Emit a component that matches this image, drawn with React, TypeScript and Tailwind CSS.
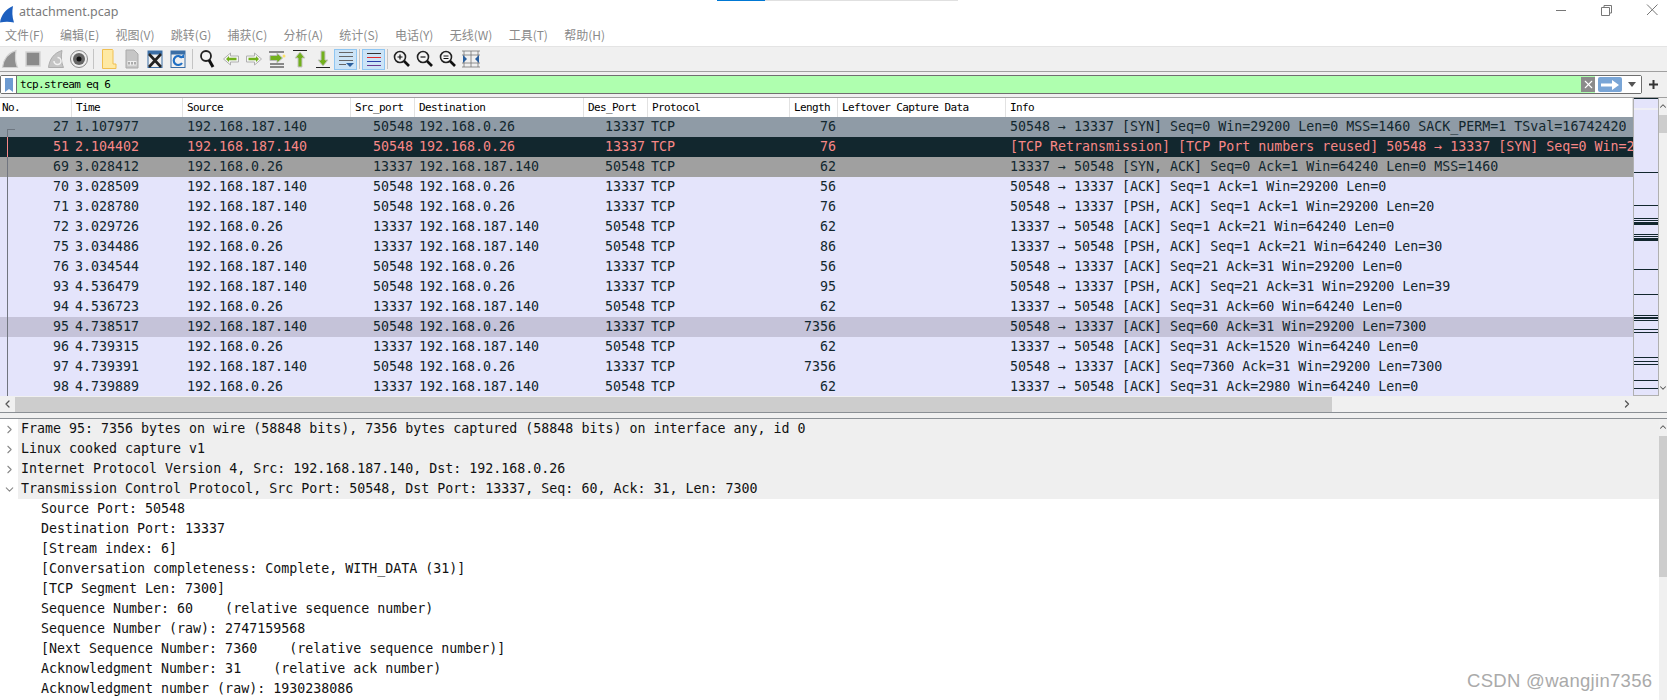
import { ChevronRight, ChevronDown, ChevronLeft, ChevronUp, X } from 'lucide-react';

const MONO = 'font-["DejaVu_Sans_Mono","Liberation_Mono",monospace]';

type Tone = 'tcp' | 'first' | 'retrans' | 'synack' | 'selected';

const rowTone: Record<Tone, string> = {
  tcp: 'bg-[#e4e4fb] text-[#12272e]',
  first: 'bg-[#8f9ba6] text-[#12272e]',
  retrans: 'bg-[#12272e] text-[#f78787]',
  synack: 'bg-[#a0a0a0] text-[#12272e]',
  selected: 'bg-[#c5c3d9] text-[#12272e]',
};

const A = '192.168.187.140';
const B = '192.168.0.26';

const packets: { no: number; time: string; out: boolean; len: number; info: string; tone: Tone }[] = [
  { no: 27, time: '1.107977', out: true, len: 76, info: '50548 → 13337 [SYN] Seq=0 Win=29200 Len=0 MSS=1460 SACK_PERM=1 TSval=16742420', tone: 'first' },
  { no: 51, time: '2.104402', out: true, len: 76, info: '[TCP Retransmission] [TCP Port numbers reused] 50548 → 13337 [SYN] Seq=0 Win=2', tone: 'retrans' },
  { no: 69, time: '3.028412', out: false, len: 62, info: '13337 → 50548 [SYN, ACK] Seq=0 Ack=1 Win=64240 Len=0 MSS=1460', tone: 'synack' },
  { no: 70, time: '3.028509', out: true, len: 56, info: '50548 → 13337 [ACK] Seq=1 Ack=1 Win=29200 Len=0', tone: 'tcp' },
  { no: 71, time: '3.028780', out: true, len: 76, info: '50548 → 13337 [PSH, ACK] Seq=1 Ack=1 Win=29200 Len=20', tone: 'tcp' },
  { no: 72, time: '3.029726', out: false, len: 62, info: '13337 → 50548 [ACK] Seq=1 Ack=21 Win=64240 Len=0', tone: 'tcp' },
  { no: 75, time: '3.034486', out: false, len: 86, info: '13337 → 50548 [PSH, ACK] Seq=1 Ack=21 Win=64240 Len=30', tone: 'tcp' },
  { no: 76, time: '3.034544', out: true, len: 56, info: '50548 → 13337 [ACK] Seq=21 Ack=31 Win=29200 Len=0', tone: 'tcp' },
  { no: 93, time: '4.536479', out: true, len: 95, info: '50548 → 13337 [PSH, ACK] Seq=21 Ack=31 Win=29200 Len=39', tone: 'tcp' },
  { no: 94, time: '4.536723', out: false, len: 62, info: '13337 → 50548 [ACK] Seq=31 Ack=60 Win=64240 Len=0', tone: 'tcp' },
  { no: 95, time: '4.738517', out: true, len: 7356, info: '50548 → 13337 [ACK] Seq=60 Ack=31 Win=29200 Len=7300', tone: 'selected' },
  { no: 96, time: '4.739315', out: false, len: 62, info: '13337 → 50548 [ACK] Seq=31 Ack=1520 Win=64240 Len=0', tone: 'tcp' },
  { no: 97, time: '4.739391', out: true, len: 7356, info: '50548 → 13337 [ACK] Seq=7360 Ack=31 Win=29200 Len=7300', tone: 'tcp' },
  { no: 98, time: '4.739889', out: false, len: 62, info: '13337 → 50548 [ACK] Seq=31 Ack=2980 Win=64240 Len=0', tone: 'tcp' },
];

const menus = ['文件(F)', '编辑(E)', '视图(V)', '跳转(G)', '捕获(C)', '分析(A)', '统计(S)', '电话(Y)', '无线(W)', '工具(T)', '帮助(H)'];

const columns = [
  { label: 'No.', w: 'w-[72px] pl-[2px]' },
  { label: 'Time', w: 'w-[111px] pl-[4px]' },
  { label: 'Source', w: 'w-[168px] pl-[4px]' },
  { label: 'Src_port', w: 'w-[64px] pl-[4px]' },
  { label: 'Destination', w: 'w-[169px] pl-[4px]' },
  { label: 'Des_Port', w: 'w-[64px] pl-[4px]' },
  { label: 'Protocol', w: 'w-[142px] pl-[4px]' },
  { label: 'Length', w: 'w-[48px] pl-[4px]' },
  { label: 'Leftover Capture Data', w: 'w-[168px] pl-[4px]' },
  { label: 'Info', w: 'flex-1 pl-[4px]' },
];

const details: { text: string; open?: boolean; child?: boolean }[] = [
  { text: 'Frame 95: 7356 bytes on wire (58848 bits), 7356 bytes captured (58848 bits) on interface any, id 0' },
  { text: 'Linux cooked capture v1' },
  { text: 'Internet Protocol Version 4, Src: 192.168.187.140, Dst: 192.168.0.26' },
  { text: 'Transmission Control Protocol, Src Port: 50548, Dst Port: 13337, Seq: 60, Ack: 31, Len: 7300', open: true },
  { text: 'Source Port: 50548', child: true },
  { text: 'Destination Port: 13337', child: true },
  { text: '[Stream index: 6]', child: true },
  { text: '[Conversation completeness: Complete, WITH_DATA (31)]', child: true },
  { text: '[TCP Segment Len: 7300]', child: true },
  { text: 'Sequence Number: 60    (relative sequence number)', child: true },
  { text: 'Sequence Number (raw): 2747159568', child: true },
  { text: '[Next Sequence Number: 7360    (relative sequence number)]', child: true },
  { text: 'Acknowledgment Number: 31    (relative ack number)', child: true },
  { text: 'Acknowledgment number (raw): 1930238086', child: true },
];

// intensity bars on the packet minimap: [y, height]
const miniMarks = [[0, 1], [74, 1], [107, 1], [120, 1], [122, 1], [124, 3], [136, 1], [138, 1], [140, 3], [171, 1], [196, 1], [217, 1], [219, 2], [222, 1], [231, 1], [234, 1], [259, 1], [263, 1], [266, 1], [282, 1], [290, 1]];

function Frame({ children }: { children: React.ReactNode }) {
  return <svg width="20" height="20" viewBox="0 0 20 20" fill="none">{children}</svg>;
}

function Glass({ mark }: { mark: 'plus' | 'minus' | 'equal' }) {
  return (
    <Frame>
      <circle cx="8" cy="8" r="5.5" fill="#f4f4f4" stroke="#222" strokeWidth="1.6" />
      <path d="M12 12l5 5" stroke="#111" strokeWidth="2.6" />
      {mark === 'plus' && <path d="M5.5 8h5M8 5.5v5" stroke="#111" strokeWidth="1.2" />}
      {mark === 'minus' && <path d="M5.5 8h5" stroke="#111" strokeWidth="1.2" />}
      {mark === 'equal' && <path d="M5.5 7h5M5.5 9.5h5" stroke="#111" strokeWidth="1.1" />}
    </Frame>
  );
}

function Arrow({ dir }: { dir: 'left' | 'right' }) {
  const flip = dir === 'left' ? 'translate(20 0) scale(-1 1)' : undefined;
  return (
    <Frame>
      <g transform={flip}>
        <path d="M2.5 7h8V4l7 6-7 6v-3h-8z" fill="#f6f6f6" stroke="#b0b0b0" />
        <path d="M4.5 8.8h7.5V7l3 3-3 3v-1.8H4.5z" fill="#72b01d" />
      </g>
    </Frame>
  );
}

const toolbar: (React.ReactNode | 'sep' | 'sepSmall')[] = [
  <Frame><path d="M2.5 18.5C3.5 10 8 4 16 1.5c-1 6-1 11 1.5 17z" fill="#8f8f8f" stroke="#d2d2d2" strokeWidth="1.2" /></Frame>,
  <Frame><rect x="3" y="3" width="14" height="14" fill="#8a8a8a" stroke="#d4d4d4" strokeWidth="1.5" /></Frame>,
  <Frame><path d="M2.5 18.5C3.5 10 8 4 16 1.5c-1 6-1 11 1.5 17z" fill="#c4c4c4" stroke="#adadad" /><path d="M8 12a3.5 3.5 0 1 0 3.5-3.5" stroke="#f2f2f2" strokeWidth="1.5" /></Frame>,
  <Frame><circle cx="10" cy="10" r="8.5" fill="#eee" stroke="#8a8a8a" /><circle cx="10" cy="10" r="6" fill="#666" /><circle cx="10" cy="10" r="2.5" fill="#111" /></Frame>,
  'sep',
  <Frame><path d="M3.5 0.5h10l.5 1v13.5h3v4.5H3.5z" fill="#fee9a3" stroke="#f0bf50" /></Frame>,
  <Frame><path d="M4 1h8l4 4v14H4z" fill="#c6c6c6" stroke="#aaa" /><path d="M5.5 12h9v4.5h-9z" fill="#efefef" /><path d="M7 13v2.5M10 13v2.5M13 13v2.5" stroke="#666" /></Frame>,
  <Frame><rect x="3" y="2" width="14" height="16.5" fill="#f0f0f0" stroke="#3b6ea5" /><path d="M3 2h14v3.5H3z" fill="#3b6ea5" /><path d="M4 5l12 13M16 5L4 18" stroke="#222" strokeWidth="2.6" /></Frame>,
  <Frame><rect x="3" y="2" width="14" height="16.5" fill="#f0f0f0" stroke="#3b6ea5" /><path d="M3 2h14v3.5H3z" fill="#3b6ea5" /><path d="M14 9a4.5 4.5 0 1 0 0 5" stroke="#1f6fc4" strokeWidth="2.2" /><path d="M11 9h5V5z" fill="#1f6fc4" /></Frame>,
  'sep',
  <Frame><circle cx="8" cy="7" r="5" fill="#f4f4f4" stroke="#222" strokeWidth="1.8" /><path d="M11 11l4 7" stroke="#111" strokeWidth="3" /></Frame>,
  <Arrow dir="left" />,
  <Arrow dir="right" />,
  <Frame>
    <path d="M2 3h15M3 15h14M3 18h14" stroke="#222" />
    <path d="M3 6.5h7V4l5.5 5-5.5 5v-2.5H3z" fill="#72b01d" stroke="#bbb" />
    <circle cx="17" cy="7" r="1.5" fill="#fde26b" />
  </Frame>,
  <Frame><path d="M3 1.5h14" stroke="#222" /><path d="M10 3l5 6h-3v9H8V9H5z" fill="#72b01d" stroke="#c6c6c6" /></Frame>,
  <Frame><path d="M3 18.5h14" stroke="#222" /><path d="M10 17l5-6h-3V2H8v9H5z" fill="#72b01d" stroke="#c6c6c6" /></Frame>,
  <span className="flex h-[21px] w-[23px] items-center justify-center border border-[#8fc6f2] bg-[#cce4f7]">
    <Frame><path d="M3 3.5h14M3 7.5h14M3 11.5h14M3 15.5h7" stroke="#666" /><path d="M10 14h8l-4 4z" fill="#2a5f9e" /></Frame>
  </span>,
  'sepSmall',
  <span className="flex h-[21px] w-[23px] items-center justify-center border border-[#8fc6f2] bg-[#cce4f7]">
    <Frame><path d="M3 4.5h14" stroke="#333" /><path d="M3 8.5h14" stroke="#e02b2b" /><path d="M3 12.5h14" stroke="#2b3fa8" /><path d="M3 16.5h14" stroke="#6b3a8f" /></Frame>
  </span>,
  'sepSmall',
  <Glass mark="plus" />,
  <Glass mark="minus" />,
  <Glass mark="equal" />,
  <Frame><path d="M3 2v16M10 2v16M17 2v16M1 2h18M1 18h18M1 6h18M1 14h18" stroke="#777" strokeWidth="0.8" /><path d="M2 6l4 4-4 4zM18 6l-4 4 4 4z" fill="#2a5f9e" /></Frame>,
];

export default function App() {
  return (
    <div className="relative flex h-[700px] w-[1667px] flex-col overflow-hidden bg-white font-['Noto_Sans','Noto_Sans_CJK_SC',sans-serif]">
      {/* browser tab strip remnant */}
      <div className="absolute left-[717px] top-0 h-px w-[48px] bg-[#0078d4]" />
      <div className="absolute left-[765px] top-0 h-px w-[193px] bg-[#e0e0e0]" />

      {/* Title */}
      <div className="flex h-[26px] shrink-0 items-center">
        <svg width="14" height="17" viewBox="0 0 14 17" className="mt-[2px]">
          <path d="M0 16.5C1 9 6 3 13 0c-1 5-1 11 1 16.5-5-1-9-1-14 0z" fill="#1c5fbf" />
        </svg>
        <span className="ml-[5px] mt-[-1px] text-[12.5px] text-[#7a7a7a]">attachment.pcap</span>
        <div className="ml-auto flex items-center gap-[31px] self-start pr-[7px] pt-[3px] text-[#777]">
          <svg width="15" height="14" viewBox="0 0 15 14"><path d="M3 7.5h10" stroke="#777" /></svg>
          <svg width="15" height="14" viewBox="0 0 15 14" fill="none"><path d="M2.5 4.5h8v8h-8zM5 4.5V2.5h7.5v7.5h-2" stroke="#777" /></svg>
          <svg width="15" height="14" viewBox="0 0 15 14"><path d="M2 1.5l10.5 10.5M12.5 1.5L2 12" stroke="#777" /></svg>
        </div>
      </div>

      {/* Menu */}
      <div className="flex h-[20px] shrink-0 items-center gap-[16.3px] pb-[2px] pl-[5px] font-['Noto_Sans_CJK_SC',sans-serif] text-[12px] text-[#8a8a8a]">
        {menus.map((m) => (
          <span key={m}>{m}</span>
        ))}
      </div>

      {/* Toolbar */}
      <div className="flex h-[25px] shrink-0 items-center border-t border-[#e4e4e4] bg-[#f0f0f0] pl-0">
        <div className="-ml-[2px] flex items-center">
          {toolbar.map((item, i) =>
            item === 'sep' ? (
              <span key={i} className="mx-[3px] h-[20px] w-px bg-[#c4c4c4]" />
            ) : item === 'sepSmall' ? (
              <span key={i} className="mx-[2px] h-[20px] w-px bg-[#c4c4c4]" />
            ) : (
              <span key={i} className="flex h-[22px] w-[23px] items-center justify-center">{item}</span>
            ),
          )}
        </div>
      </div>

      {/* Display filter */}
      <div className="flex h-[26px] shrink-0 items-center border-t border-[#a0a0a0] bg-[#f0f0f0] pr-[3px]">
        <div className="flex h-[19px] flex-1 items-stretch rounded-[2px] border border-[#6f6f6f] bg-[#afffaf]">
          <span className="flex w-[16px] items-center justify-center border-r border-[#6f6f6f] bg-white">
            <svg width="8" height="14" viewBox="0 0 8 14"><path d="M0 0h8v14L4 11l-4 3z" fill="#6d9bd1" /></svg>
          </span>
          <span className={`${MONO} flex-1 pl-[3px] text-[11px] leading-[17px] tracking-[-0.6px] text-black`}>tcp.stream eq 6</span>
          <span className="my-px flex w-[14px] items-center justify-center bg-[#8b8b8b]"><X size={13} color="#fff" strokeWidth={2} /></span>
          <span className="flex w-[28px] items-center bg-white pl-[3px]">
            <span className="flex h-[15px] w-[24px] items-center justify-center rounded-[2px] bg-[#79a5d6]">
              <svg width="18" height="10" viewBox="0 0 18 10"><path d="M0 3.5h11V0l7 5-7 5V6.5H0z" fill="#fff" /></svg>
            </span>
          </span>
          <span className="flex w-[18px] items-center justify-center bg-white">
            <svg width="8" height="5" viewBox="0 0 8 5"><path d="M0 0h8L4 5z" fill="#555" /></svg>
          </span>
        </div>
        <span className="flex w-[22px] justify-center text-[#333]">
          <svg width="9" height="9" viewBox="0 0 9 9"><path d="M0 4.5h9M4.5 0v9" stroke="#333" strokeWidth="2" /></svg>
        </span>
      </div>

      {/* Packet list */}
      <div className="flex h-[299px] shrink-0 border-t border-[#a0a0a0]">
        <div className="flex min-w-0 flex-1 flex-col">
          <div className={`${MONO} flex h-[19px] shrink-0 items-center text-[11px] tracking-[-0.6px] text-black`}>
            {columns.map((c) => (
              <span key={c.label} className={`${c.w} h-full shrink-0 border-r border-[#e2e2e2] leading-[19px]`}>{c.label}</span>
            ))}
          </div>
          <div className={`${MONO} relative flex-1 overflow-hidden text-[13.3px]`}>
            {packets.map((p) => (
              <div key={p.no} className={`flex h-[20px] items-center whitespace-nowrap leading-[20px] ${rowTone[p.tone]}`}>
                <span className="w-[69px] shrink-0 text-right">{p.no}</span>
                <span className="w-[114px] shrink-0 pl-[6px]">{p.time}</span>
                <span className="w-[168px] shrink-0 pl-[4px]">{p.out ? A : B}</span>
                <span className="w-[62px] shrink-0 text-right">{p.out ? 50548 : 13337}</span>
                <span className="w-[171px] shrink-0 pl-[6px]">{p.out ? B : A}</span>
                <span className="w-[61px] shrink-0 text-right">{p.out ? 13337 : 50548}</span>
                <span className="w-[145px] shrink-0 pl-[6px]">TCP</span>
                <span className="w-[46px] shrink-0 text-right">{p.len}</span>
                <span className="w-[170px] shrink-0" />
                <span className="overflow-hidden pl-[4px]">{p.info}</span>
              </div>
            ))}
            {/* related packet bracket */}
            <div className="absolute left-[7px] top-[12px] h-[8px] w-[8px] border-l border-t border-[#6d7680]" />
            <div className="absolute left-[7px] top-[20px] h-[20px] w-px bg-[#f78787]" />
            <div className="absolute bottom-0 left-[7px] top-[40px] w-px bg-[#71757f]" />
          </div>
        </div>
        <svg className="shrink-0 border-x border-b border-[#b0b0b0] bg-[#e4e4fb]" width="26" height="298" viewBox="0 0 24 297">
          {miniMarks.map(([y, h], i) => (
            <rect key={i} x="0" y={y} width="24" height={h} fill="#12272e" />
          ))}
          <rect x="0" y="10" width="24" height="2" fill="#efeff5" />
        </svg>
        <div className="flex w-[8px] shrink-0 flex-col overflow-hidden bg-[#f0f0f0]">
          <ChevronUp size={10} className="-ml-px mt-[3px] shrink-0 text-[#555]" strokeWidth={2.5} />
          <div className="mt-[4px] h-[18px] bg-[#cdcdcd]" />
          <ChevronDown size={10} className="-ml-px mb-[3px] mt-auto shrink-0 text-[#555]" strokeWidth={2.5} />
        </div>
      </div>

      {/* Horizontal scrollbar */}
      <div className="flex h-[16px] shrink-0 items-center bg-[#f0f0f0] pr-[34px]">
        <ChevronLeft size={12} className="w-[15px] text-[#555]" strokeWidth={2.6} />
        <div className="h-[15px] w-[1317px] bg-[#cdcdcd]" />
        <ChevronRight size={12} className="ml-auto text-[#555]" strokeWidth={2.6} />
      </div>

      {/* Splitter */}
      <div className="h-[7px] shrink-0 border-y border-[#8a8f94] bg-[#f0f0f0]" />

      {/* Packet details */}
      <div className="flex min-h-0 flex-1">
        <div className={`${MONO} min-w-0 flex-1 overflow-hidden text-[13.3px] text-[#111]`}>
          {details.map((d) => (
            <div key={d.text} className={`flex h-[20px] items-center whitespace-pre leading-[20px] ${d.child ? 'pl-[41px]' : ''}`}>
              {!d.child && (
                <span className="flex w-[18px] shrink-0 justify-center text-[#888]">
                  {d.open ? <ChevronDown size={13} strokeWidth={2} /> : <ChevronRight size={13} strokeWidth={2} />}
                </span>
              )}
              <span className={d.child ? '' : 'flex-1 bg-[#efefef] pl-[3px]'}>{d.text}</span>
            </div>
          ))}
        </div>
        <div className="flex w-[8px] shrink-0 flex-col overflow-hidden bg-[#f0f0f0]">
          <ChevronUp size={10} className="-ml-px mt-[3px] shrink-0 text-[#555]" strokeWidth={2.5} />
          <div className="mt-[4px] h-[141px] bg-[#cdcdcd]" />
        </div>
      </div>

      {/* Watermark */}
      <span className="absolute left-[1467px] top-[667px] font-['Liberation_Sans',sans-serif] text-[18.5px] tracking-[0.3px] text-[#aaaaaa]">CSDN @wangjin7356</span>
    </div>
  );
}
